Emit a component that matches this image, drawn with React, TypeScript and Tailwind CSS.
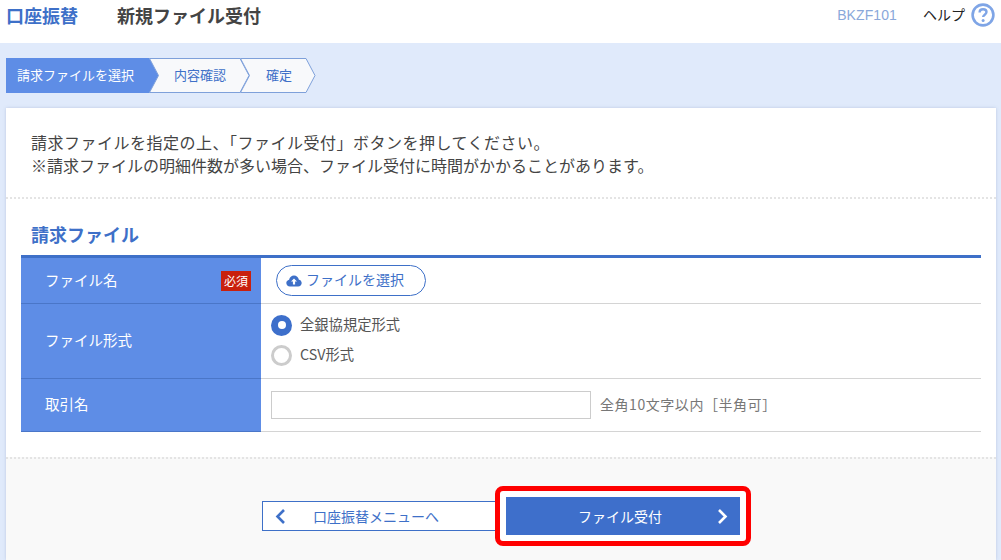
import React from 'react';

const jp = "font-['Meiryo','Noto_Sans_CJK_JP',sans-serif]";

const StepShape: React.FC<{ points: string; fill: string; stroke: string; w: number }> = ({ points, fill, stroke, w }) => (
  <svg className="absolute inset-0" width={w} height={35} viewBox={`0 0 ${w} 35`}>
    <polygon points={points} fill={fill} stroke={stroke} strokeWidth="1" />
  </svg>
);

const Row: React.FC<{ label: string; className: string; badge?: boolean; children: React.ReactNode }> = ({ label, className, badge, children }) => (
  <div className={`flex border-b border-[#d4d4d4] ${className}`}>
    <div className="flex w-[240px] shrink-0 items-center justify-between border-b border-[#4a76c8] -mb-px bg-[#5e8de6] pl-[24px] pr-[10px] text-[14.5px] text-white">
      <span className="pb-[2px]">{label}</span>
      {badge && <span className="flex h-[20px] w-[30px] items-center justify-center bg-[#c9200d] text-[12px] text-white">必須</span>}
    </div>
    <div className="flex min-w-0 flex-1 pl-[10px]">{children}</div>
  </div>
);

const Radio: React.FC<{ checked?: boolean; label: string }> = ({ checked, label }) => (
  <div className="flex h-[30px] items-center gap-[8px] text-[14.3px] text-[#555]">
    {checked ? (
      <span className="flex h-[21px] w-[21px] items-center justify-center rounded-full bg-[#3d6fcb]">
        <span className="h-[8px] w-[8px] rounded-full bg-white" />
      </span>
    ) : (
      <span className="h-[21px] w-[21px] rounded-full border-[3px] border-[#cccccc] bg-white" />
    )}
    <span className="pb-[2px]">{label}</span>
  </div>
);

export default function App() {
  return (
    <div className={`flex h-[560px] w-[1001px] flex-col overflow-hidden bg-[#e0eafb] ${jp}`}>
      {/* header */}
      <div className="flex h-[43px] shrink-0 items-start bg-white pl-[6px] pr-[6px] pt-[3px]">
        <span className="w-[111px] text-[18px] font-bold leading-[24px] text-[#3e70c8]">口座振替</span>
        <span className="text-[18px] font-bold leading-[24px] text-[#444]">新規ファイル受付</span>
        <span className="ml-auto pt-[2px] font-['Liberation_Sans',sans-serif] text-[14px] tracking-[0.1px] leading-[20px] text-[#8aa8da]">BKZF101</span>
        <span className="ml-[26px] pt-[1px] text-[14px] leading-[20px] text-[#222]">ヘルプ</span>
        <svg className="ml-[6px]" width="24" height="24" viewBox="0 0 24 24" fill="none">
          <circle cx="12" cy="12" r="10.4" stroke="#7fa5e6" strokeWidth="2.6" />
          <path d="M8.6 9.4c0-2 1.5-3.2 3.5-3.2s3.4 1.2 3.4 2.9c0 2.6-3.4 2.6-3.4 5" stroke="#7fa5e6" strokeWidth="2.4" />
          <circle cx="12.1" cy="17.6" r="1.5" fill="#7fa5e6" />
        </svg>
      </div>

      {/* steps */}
      <div className="mt-[15px] ml-[6px] flex h-[35px] shrink-0 text-[13px]">
        <div className="relative flex h-[35px] w-[153px] items-center pb-[2px] pl-[11px] text-white">
          <StepShape w={153} points="0,0 143,0 152.5,17.5 143,35 0,35" fill="#5e8de6" stroke="#5e8de6" />
          <span className="relative">請求ファイルを選択</span>
        </div>
        <div className="relative -ml-[10px] flex h-[35px] w-[101px] items-center pb-[2px] pl-[25px] text-[#3e70c8]">
          <StepShape w={101} points="0.5,0.5 91,0.5 100,17.5 91,34.5 0.5,34.5 9.5,17.5" fill="#f8f9fb" stroke="#7ea0da" />
          <span className="relative">内容確認</span>
        </div>
        <div className="relative -ml-[10px] flex h-[35px] w-[76px] items-center pb-[2px] pl-[26px] text-[#3e70c8]">
          <StepShape w={76} points="0.5,0.5 66,0.5 75,17.5 66,34.5 0.5,34.5 9.5,17.5" fill="#f8f9fb" stroke="#7ea0da" />
          <span className="relative">確定</span>
        </div>
      </div>

      {/* card */}
      <div className="mt-[15px] mr-[5px] ml-[6px] flex min-h-0 flex-1 flex-col bg-white shadow-[0_0_3px_rgba(120,140,180,0.35)]">
        <div className="h-[91px] shrink-0 border-b-2 border-dotted border-[#e4e4e4] pl-[25px] pt-[23px] text-[16px] leading-[23px] text-[#444]">
          <p className="tracking-[0.5px]">請求ファイルを指定の上、「ファイル受付」ボタンを押してください。</p>
          <p>※請求ファイルの明細件数が多い場合、ファイル受付に時間がかかることがあります。</p>
        </div>

        <div className="flex h-[258px] shrink-0 flex-col px-[15px]">
          <h2 className="flex h-[59px] shrink-0 items-end border-b-[3px] border-[#3e70c8] pb-[9px] pl-[10px] text-[18px] font-bold leading-[24px] text-[#3e70c8]">
            請求ファイル
          </h2>
          <Row label="ファイル名" badge className="h-[46px]">
            <div className="flex items-center pl-[5px]">
              <div className="flex h-[31px] w-[150px] items-center gap-[4px] rounded-full border border-[#3e70c8] pl-[9px] text-[14px] text-[#3e70c8]">
                <svg width="16" height="12" viewBox="0 0 16 12">
                  <path d="M4 11.5C1.8 11.5 .3 10 .3 8.1c0-1.7 1.2-3 2.8-3.3C3.6 2.4 5.6.6 8 .6c2.5 0 4.4 1.7 4.9 4.1 1.6.2 2.8 1.6 2.8 3.4 0 1.9-1.5 3.4-3.6 3.4z" fill="#3e70c8" />
                  <path d="M8 3.4l3 3.2H9.1v2.9H6.9V6.6H5z" fill="#fff" />
                </svg>
                <span className="pb-[2px]">ファイルを選択</span>
              </div>
            </div>
          </Row>
          <Row label="ファイル形式" className="h-[75px]">
            <div className="flex flex-col justify-center pb-[2px]">
              <Radio checked label="全銀協規定形式" />
              <Radio label="CSV形式" />
            </div>
          </Row>
          <Row label="取引名" className="h-[53px]">
            <div className="flex items-center gap-[9px]">
              <input className="h-[28px] w-[320px] border border-[#cccccc] bg-white" />
              <span className="pb-[2px] text-[14px] tracking-[0.55px] text-[#777]">全角10文字以内［半角可］</span>
            </div>
          </Row>
        </div>

        {/* footer */}
        <div className="flex min-h-0 flex-1 items-start border-t-2 border-dotted border-[#e4e4e4] bg-[#f9f9f9] pl-[256px] pt-[27px]">
          <div className="mt-[15px] flex h-[30px] w-[240px] shrink-0 items-center border border-[#3e70c8] bg-white pl-[12px] text-[14px] text-[#3e70c8]">
            <svg width="11" height="17" viewBox="0 0 11 17" fill="none">
              <path d="M9 2L2.5 8.5 9 15" stroke="#3e70c8" strokeWidth="2.6" />
            </svg>
            <span className="ml-[27px]">口座振替メニューへ</span>
          </div>
          <div className="relative -ml-[7px] h-[60px] w-[256px] shrink-0 rounded-[8px] border-[5px] border-[#ff0000] bg-white p-[6px]">
            <div className="relative flex h-[38px] w-[234px] items-center justify-center bg-[#3e6fcb] pr-[6px] text-[14px] text-white">
              <span>ファイル受付</span>
              <svg className="absolute right-[12px] top-[11px]" width="11" height="17" viewBox="0 0 11 17" fill="none">
                <path d="M2 2l6.5 6.5L2 15" stroke="#fff" strokeWidth="2.6" />
              </svg>
            </div>
          </div>
        </div>
      </div>
    </div>
  );
}
